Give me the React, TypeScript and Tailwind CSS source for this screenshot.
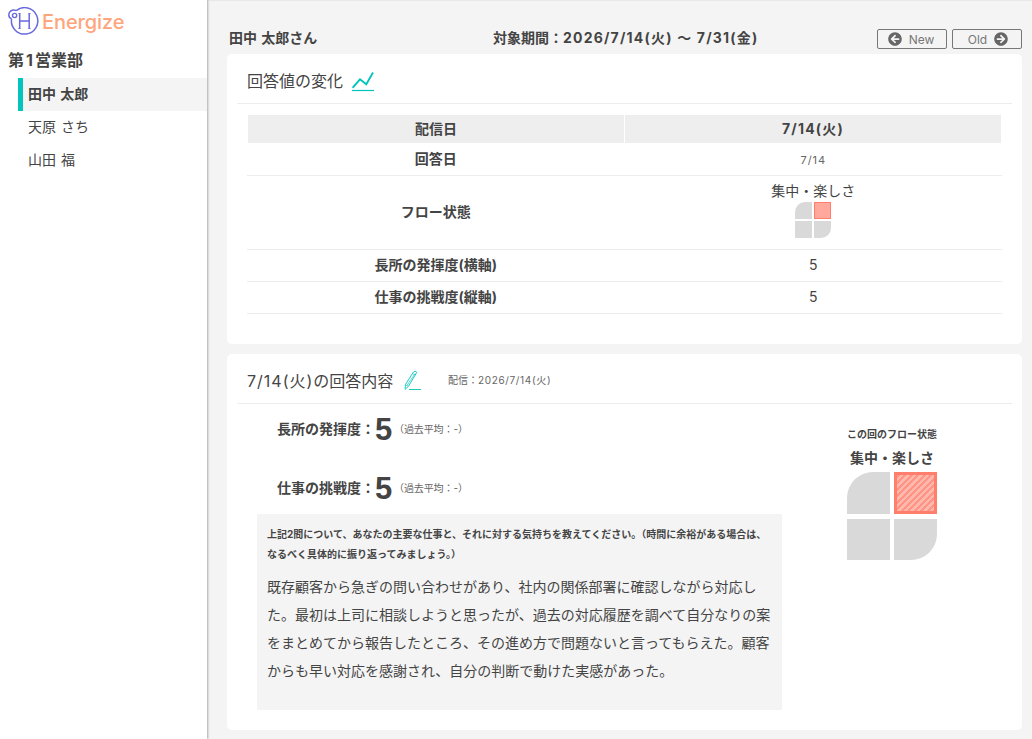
import React from 'react';
import { FaArrowCircleLeft, FaArrowCircleRight } from 'react-icons/fa';

const members = ['田中 太郎', '天原 さち', '山田 福'];

const Logo: React.FC = () => (
  <svg width="32" height="30" viewBox="0 0 32 30" fill="none">
    <path
      d="M8.3 3.6A13.2 13.2 0 1 1 3.6 11.6M8.3 3.6C4.5 2.2 .8 4 .8 7.8C.8 10 2 11.4 3.6 11.6"
      stroke="#6a6ade"
      strokeWidth="1.5"
    />
    <circle cx="6.6" cy="8.5" r="2.1" stroke="#6a6ade" strokeWidth="1.4" />
    <path d="M11.7 6.2v15.8M21.2 6.2v15.8M11.7 14h10" stroke="#6a6ade" strokeWidth="1.5" />
    <path d="M10.4 6.5h2M20.5 6.5h2M10.4 21.5h2M20.5 21.5h2" stroke="#6a6ade" strokeWidth="1" />
  </svg>
);

const ChartIcon: React.FC = () => (
  <svg width="22" height="21" viewBox="0 0 22 21" fill="none" stroke="#00c4bd">
    <path d="M.6 16.8L8 8.3l6.3 5L21 1.5" strokeWidth="1.8" />
    <path d="M0 19.5h22" strokeWidth="1.2" />
  </svg>
);

const PencilIcon: React.FC = () => (
  <svg width="18" height="21" viewBox="0 0 18 21" fill="none" stroke="#20c9c2">
    <path d="M1.3 14.8L9.4 2.1Q11 .3 12.8 2.3L4.5 16.2L1.2 19.3Z" strokeWidth="1" />
    <path d="M1.3 14.8L4.5 16.2M8.5 3.6L12 5M3 15.4L10.8 3.9" strokeWidth=".7" />
    <path d="M5 19.5h12" strokeWidth="1" />
  </svg>
);

const FlowSmall: React.FC = () => (
  <div className="grid h-9 w-9 grid-cols-2 grid-rows-2 gap-[2px]">
    <div className="rounded-tl-[10px] bg-[#d9d9d9]" />
    <div className="border border-[#ff7f6c] bg-[#ffa89b]" />
    <div className="bg-[#d9d9d9]" />
    <div className="rounded-br-[10px] bg-[#d9d9d9]" />
  </div>
);

const FlowLarge: React.FC = () => (
  <div className="grid h-[88px] w-[90px] grid-cols-2 grid-rows-2 gap-x-1 gap-y-[5px]">
    <div className="rounded-tl-[26px] bg-[#d9d9d9]" />
    <div className="border-[3px] border-[#ff7f6c] bg-[repeating-linear-gradient(135deg,#ff9485_0px,#ff9485_2.4px,#ffb8ad_2.4px,#ffb8ad_4.6px)]" />
    <div className="bg-[#d9d9d9]" />
    <div className="rounded-br-[26px] bg-[#d9d9d9]" />
  </div>
);

const Score: React.FC<{ label: string; value: number }> = ({ label, value }) => (
  <div className="flex h-[59px] items-start pl-5">
    <div className="flex h-[30px] items-center">
      <span className="pb-[2px] text-[14px] font-bold">{label}：</span>
      <span className="w-[18px] pt-px font-['Liberation_Sans',sans-serif] text-[31px] font-bold leading-[30px]">{value}</span>
      <span className="ml-px text-[10px] tracking-[-0.1px] text-[#666]">（過去平均：-）</span>
    </div>
  </div>
);

const App: React.FC = () => {
  return (
    <div className="flex h-[739px] overflow-hidden bg-[#f4f4f4] font-['Inter','Noto_Sans_CJK_JP',sans-serif] text-[#444]">
      {/* Sidebar */}
      <aside className="z-10 w-[207px] shrink-0 bg-white shadow-[1px_0_2px_rgba(0,0,0,0.3)]">
        <div className="flex h-[43px] items-center pl-2">
          <Logo />
          <span className="ml-[2px] pt-px text-[20px] font-medium tracking-[-0.1px] text-[#ffa57d]">Energize</span>
        </div>
        <h1 className="h-[35px] pl-2 text-base font-bold leading-[34px]">
          第<span className="px-[2px]">1</span>営業部
        </h1>
        <ul className="pl-[18px] text-[14px] [word-spacing:1px]">
          {members.map((name, i) => (
            <li
              key={name}
              className={
                i === 0
                  ? 'h-[33px] border-l-[5px] border-[#00c4bd] bg-[#f4f4f4] pl-[5px] font-bold leading-[32px]'
                  : 'h-[33px] pl-[10px] leading-[31px]'
              }
            >
              {name}
            </li>
          ))}
        </ul>
      </aside>

      <main className="flex-1 border-t border-[#e8e8e8] pl-5 pr-[10px]">
        <div className="flex h-[53px] text-[14px] font-bold">
          <div className="w-[266px] pl-[2px] pt-[27px] leading-5 [word-spacing:1px]">田中 太郎さん</div>
          <div className="flex-1 whitespace-nowrap pt-[27px] leading-5">
            対象期間：<span className="tracking-[1.2px]">2026/7/14(火) 〜 7/31(金)</span>
          </div>
          <div className="flex gap-[5px] pt-7 text-xs font-normal text-[#777]">
            <button className="flex h-5 w-[70px] items-center justify-center gap-[7px] rounded-[2px] border border-[#777] pr-[2px]">
              <FaArrowCircleLeft size={14} color="#666" />
              <span className="pt-px">New</span>
            </button>
            <button className="flex h-5 w-[70px] items-center justify-center gap-[7px] rounded-[2px] border border-[#777] pl-[2px]">
              <span className="pt-px">Old</span>
              <FaArrowCircleRight size={14} color="#666" />
            </button>
          </div>
        </div>

        {/* Score history */}
        <section className="h-[290px] rounded-[5px] bg-white px-[10px]">
          <h2 className="flex h-[50px] items-center gap-[9px] border-b border-[#ededed] pl-[10px] text-base">
            <span className="pt-1">回答値の変化</span>
            <span className="pt-[5px]"><ChartIcon /></span>
          </h2>
          <div className="mx-[10px] mt-[11px] text-center text-[14px]">
            <div className="mx-px grid h-7 grid-cols-2 gap-px font-bold leading-7">
              <div className="bg-[#eee]">配信日</div>
              <div className="bg-[#eee] tracking-[1.2px]">7/14(火)</div>
            </div>
            <div className="grid h-[33px] grid-cols-2 border-b border-[#ededed] leading-8">
              <div className="font-bold">回答日</div>
              <div className="text-[11px] leading-[34px] tracking-[0.9px] text-[#666]">7/14</div>
            </div>
            <div className="grid h-[74px] grid-cols-2 border-b border-[#ededed]">
              <div className="font-bold leading-[72px]">フロー状態</div>
              <div className="flex flex-col items-center">
                <span className="h-[26px] leading-[29px]">集中・楽しさ</span>
                <FlowSmall />
              </div>
            </div>
            <div className="grid h-8 grid-cols-2 border-b border-[#ededed] leading-[30px]">
              <div className="font-bold">長所の発揮度(横軸)</div>
              <div>5</div>
            </div>
            <div className="grid h-8 grid-cols-2 border-b border-[#ededed] leading-[30px]">
              <div className="font-bold">仕事の挑戦度(縦軸)</div>
              <div>5</div>
            </div>
          </div>
        </section>

        {/* Answer detail */}
        <section className="mt-[10px] h-[376px] rounded-[5px] bg-white px-[10px]">
          <div className="flex h-[50px] items-center border-b border-[#ededed] pl-[10px] pt-1">
            <h2 className="w-[157px] whitespace-nowrap text-base">
              <span className="tracking-[1px]">7/14(火)</span>の回答内容
            </h2>
            <PencilIcon />
            <span className="ml-[26px] text-[10px] text-[#666]">
              配信：<span className="tracking-[0.65px]">2026/7/14(火)</span>
            </span>
          </div>
          <div className="flex">
            <div className="w-[545px] pl-5 pt-[10px]">
              <Score label="長所の発揮度" value={5} />
              <Score label="仕事の挑戦度" value={5} />
              <div className="-mt-[18px] h-[196px] bg-[#f4f4f4] px-[10px] pt-[10px]">
                <p className="whitespace-nowrap text-[10px] font-bold leading-5">
                  上記2問について、あなたの主要な仕事と、それに対する気持ちを教えてください。（時間に余裕がある場合は、
                  <br />
                  なるべく具体的に振り返ってみましょう。）
                </p>
                <p className="whitespace-nowrap pt-[9px] text-[14px] leading-7">
                  既存顧客から急ぎの問い合わせがあり、社内の関係部署に確認しながら対応し
                  <br />
                  た。最初は上司に相談しようと思ったが、過去の対応履歴を調べて自分なりの案
                  <br />
                  をまとめてから報告したところ、その進め方で問題ないと言ってもらえた。顧客
                  <br />
                  からも早い対応を感謝され、自分の判断で動けた実感があった。
                </p>
              </div>
            </div>
            <div className="flex flex-1 flex-col items-center pr-[10px] pt-5 font-bold">
              <span className="text-[10px] leading-5">この回のフロー状態</span>
              <span className="h-7 text-[14px] leading-[27px]">集中・楽しさ</span>
              <FlowLarge />
            </div>
          </div>
        </section>
      </main>
    </div>
  );
};

export default App;
